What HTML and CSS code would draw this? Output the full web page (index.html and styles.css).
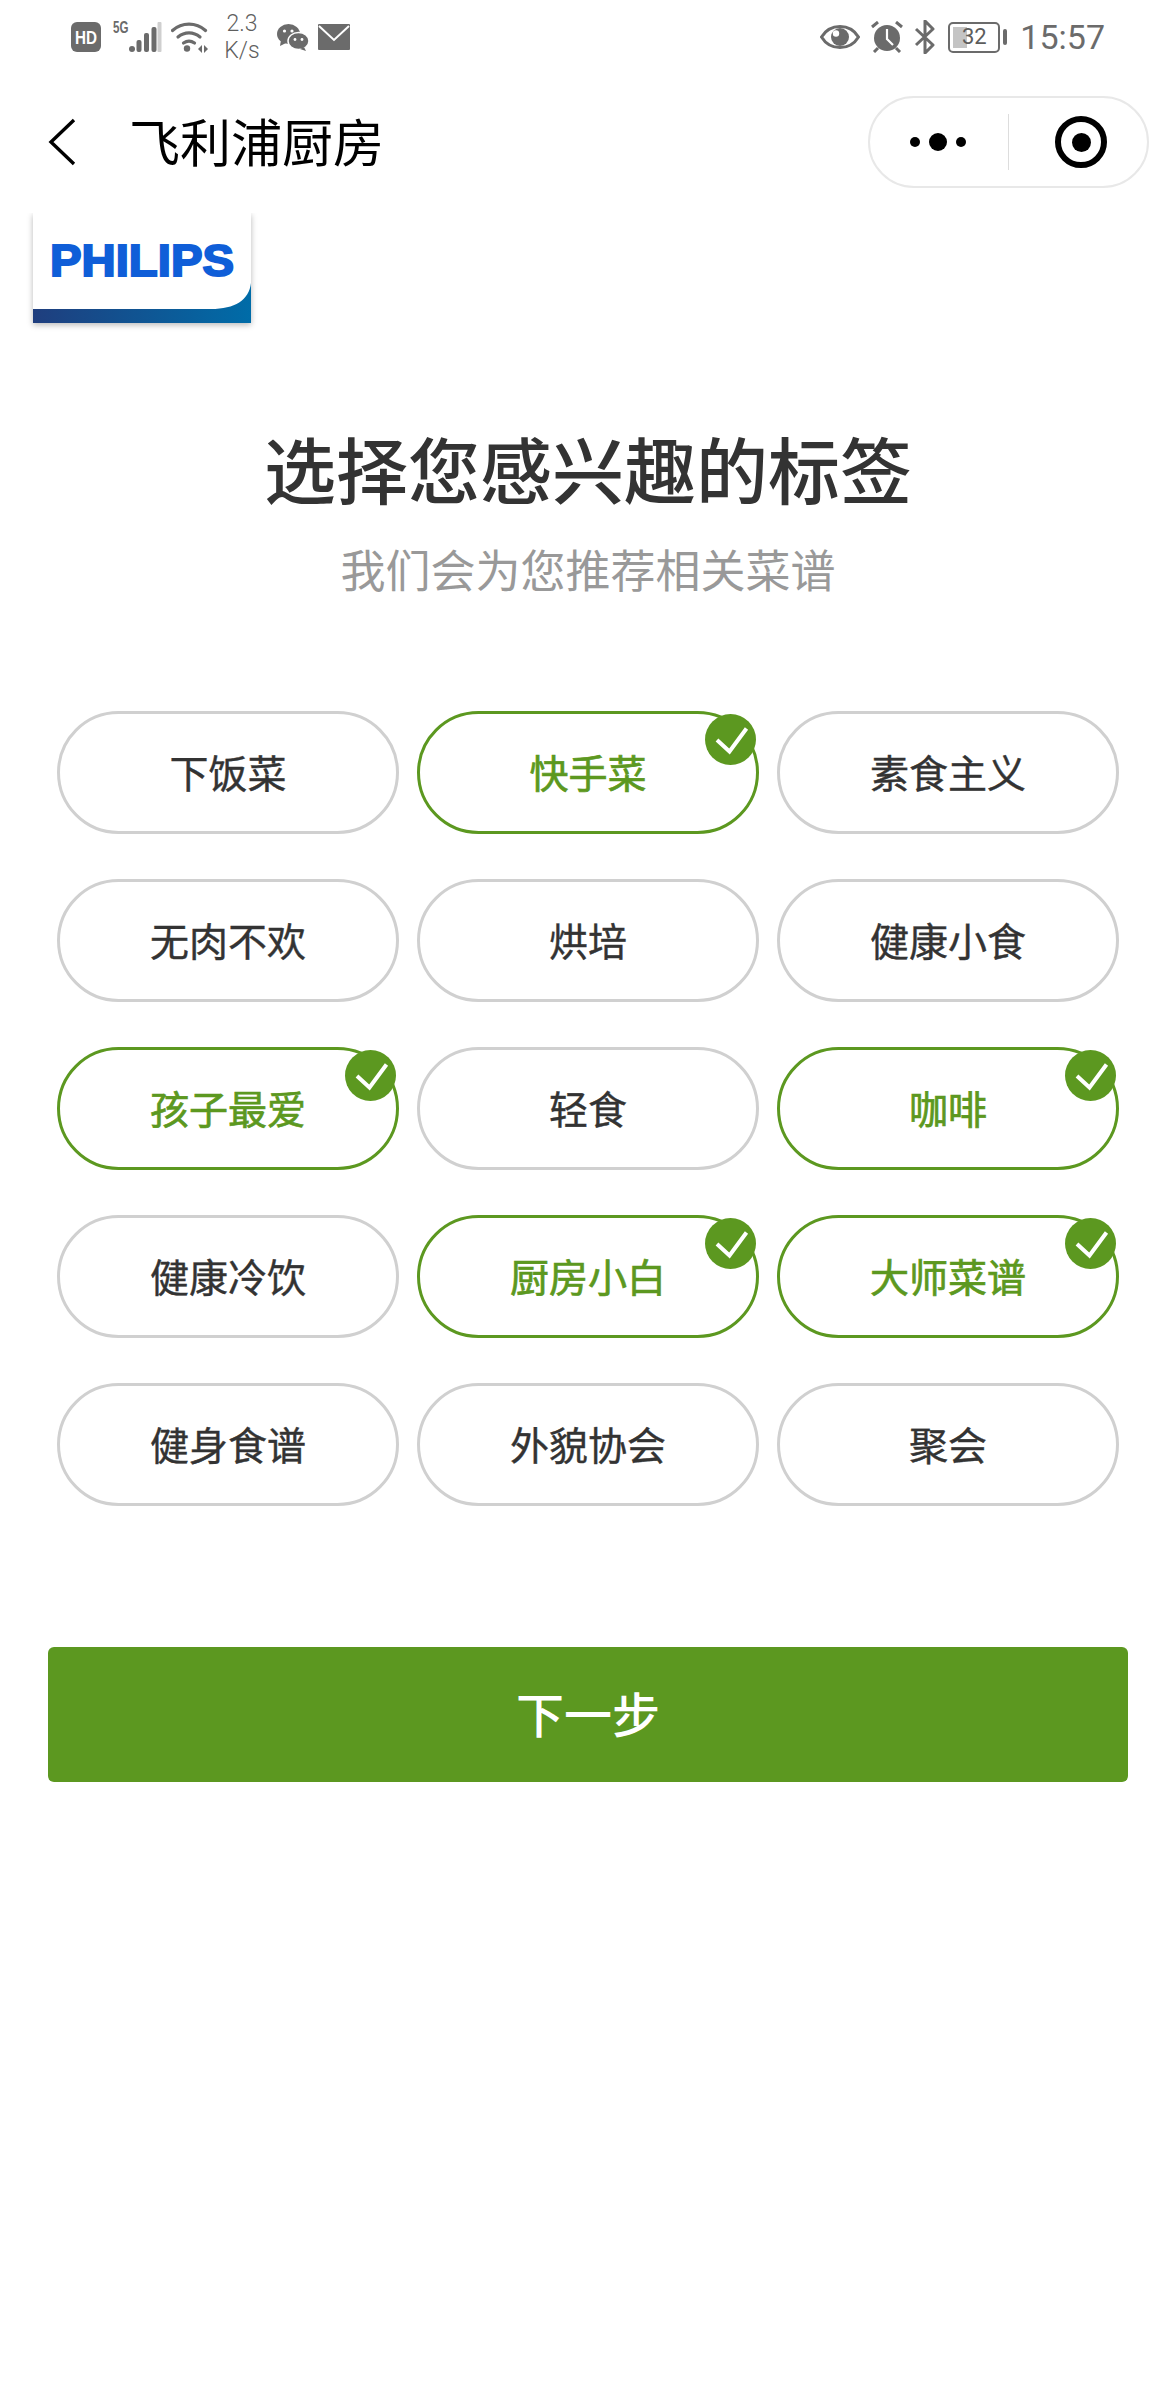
FILE: index.html
```html
<!DOCTYPE html>
<html lang="zh-CN">
<head>
<meta charset="utf-8">
<title>飞利浦厨房</title>
<link rel="stylesheet" href="styles.css">
</head>
<body>
<div class="status">
  <div class="status-group left">
    <svg class="ic-hd" width="30" height="30" viewBox="0 0 30 30"><rect width="30" height="30" rx="6" fill="#6b6b6b"/><text x="4" y="21.500" class="hd-text" textLength="22" lengthAdjust="spacingAndGlyphs">HD</text></svg>
    <div class="signal">
      <span class="five-g">5G</span>
      <svg width="34" height="31" viewBox="0 0 34 31"><circle cx="4" cy="27" r="3" fill="#6b6b6b"/><rect x="8.500" y="18" width="5" height="12" rx="2" fill="#6b6b6b"/><rect x="16" y="11" width="5" height="19" rx="2" fill="#6b6b6b"/><rect x="23.500" y="5" width="5" height="25" rx="2" fill="#6b6b6b"/><rect x="29.500" y="0" width="4" height="30" rx="1" fill="#cfcfcf"/></svg>
    </div>
    <svg class="ic-wifi" width="38" height="32" viewBox="0 0 38 32"><g fill="none" stroke="#6b6b6b" stroke-width="3.200" stroke-linecap="round"><path d="M1.500 9.500C11 1 25 1 34.500 9.500"/><path d="M7 16C13.500 10.500 22.500 10.500 29 16"/><path d="M12.500 22C16 19.500 20 19.500 23.500 22"/></g><circle cx="16" cy="27.500" r="3.200" fill="#6b6b6b"/><path d="M27 28l4-4v8zM33 24l4 4-4 4z" fill="#6b6b6b"/></svg>
    <div class="speed"><span>2.3</span><span>K/s</span></div>
    <svg class="ic-wechat" width="32" height="27" viewBox="0 0 32 27"><ellipse cx="11.500" cy="10" rx="11.500" ry="10" fill="#6b6b6b"/><path d="M4 16l-1 6 6-3z" fill="#6b6b6b"/><ellipse cx="21.500" cy="17" rx="10.500" ry="8.500" fill="#6b6b6b" stroke="#fff" stroke-width="1.500"/><path d="M27 23l2 4-6-2z" fill="#6b6b6b"/><circle cx="7.500" cy="7" r="1.600" fill="#fff"/><circle cx="15" cy="7" r="1.600" fill="#fff"/><circle cx="18" cy="15.500" r="1.400" fill="#fff"/><circle cx="25" cy="15.500" r="1.400" fill="#fff"/></svg>
    <svg class="ic-mail" width="32" height="26" viewBox="0 0 32 26"><rect width="32" height="26" rx="1" fill="#6b6b6b"/><path d="M1 2l15 14L31 2" fill="none" stroke="#fff" stroke-width="2"/></svg>
  </div>
  <div class="status-group right">
    <svg width="40" height="26" viewBox="0 0 40 26"><path d="M1.500 13C10 -1 30 -1 38.500 13C30 27 10 27 1.500 13Z" fill="none" stroke="#6b6b6b" stroke-width="3"/><circle cx="20" cy="13" r="9" fill="#6b6b6b"/><circle cx="16" cy="9.500" r="3.200" fill="#fff"/></svg>
    <svg width="34" height="32" viewBox="0 0 34 32"><circle cx="17" cy="17" r="13" fill="#6b6b6b"/><path d="M17 8v10l6 6" fill="none" stroke="#fff" stroke-width="2.200"/><path d="M2 6l6-5M32 6l-6-5M4 31l4-4M30 31l-4-4" stroke="#6b6b6b" stroke-width="3" fill="none"/></svg>
    <svg width="22" height="34" viewBox="0 0 22 34"><path d="M2 9l17 16-8 8V1l8 8L2 25" fill="none" stroke="#6b6b6b" stroke-width="3" stroke-linejoin="round"/></svg>
    <div class="battery">
      <div class="battery-body"><span class="battery-fill"></span><span class="battery-num">32</span></div>
      <span class="battery-tip"></span>
    </div>
    <span class="time">15:57</span>
  </div>
</div>

<div class="nav">
  <svg class="back" width="30" height="50" viewBox="0 0 30 50"><path d="M27 3L4 25l23 22" fill="none" stroke="#000" stroke-width="3.400"/></svg>
  <h1 class="nav-title">飞利浦厨房</h1>
  <div class="capsule">
    <div class="capsule-more"><span class="dot"></span><span class="dot big"></span><span class="dot"></span></div>
    <div class="capsule-close"><span class="target"></span></div>
  </div>
</div>

<div class="logo">
  <svg width="218" height="110" viewBox="0 0 218 110">
    <defs><linearGradient id="wave" x1="0" x2="1" y1="0" y2="0"><stop offset="0" stop-color="#1f3e7e"/><stop offset="1" stop-color="#006ca8"/></linearGradient></defs>
    <rect width="218" height="110" fill="#fff"/>
    <path d="M0 96H178C202 96 216 87 218 70V110H0Z" fill="url(#wave)"/>
    <text x="17" y="63" class="logo-text" textLength="184" lengthAdjust="spacingAndGlyphs">PHILIPS</text>
  </svg>
</div>

<main class="main">
  <h2 class="title">选择您感兴趣的标签</h2>
  <p class="subtitle">我们会为您推荐相关菜谱</p>
  <div class="tags">
    <div class="tag">下饭菜</div>
    <div class="tag on">快手菜<svg class="check" viewBox="0 0 51 51"><circle cx="25.500" cy="25.500" r="25.500" fill="#5c9820"/><path d="M12 26l12.500 11.500L41.500 14.500" fill="none" stroke="#fff" stroke-width="4"/></svg></div>
    <div class="tag">素食主义</div>
    <div class="tag">无肉不欢</div>
    <div class="tag">烘培</div>
    <div class="tag">健康小食</div>
    <div class="tag on">孩子最爱<svg class="check" viewBox="0 0 51 51"><circle cx="25.500" cy="25.500" r="25.500" fill="#5c9820"/><path d="M12 26l12.500 11.500L41.500 14.500" fill="none" stroke="#fff" stroke-width="4"/></svg></div>
    <div class="tag">轻食</div>
    <div class="tag on">咖啡<svg class="check" viewBox="0 0 51 51"><circle cx="25.500" cy="25.500" r="25.500" fill="#5c9820"/><path d="M12 26l12.500 11.500L41.500 14.500" fill="none" stroke="#fff" stroke-width="4"/></svg></div>
    <div class="tag">健康冷饮</div>
    <div class="tag on">厨房小白<svg class="check" viewBox="0 0 51 51"><circle cx="25.500" cy="25.500" r="25.500" fill="#5c9820"/><path d="M12 26l12.500 11.500L41.500 14.500" fill="none" stroke="#fff" stroke-width="4"/></svg></div>
    <div class="tag on">大师菜谱<svg class="check" viewBox="0 0 51 51"><circle cx="25.500" cy="25.500" r="25.500" fill="#5c9820"/><path d="M12 26l12.500 11.500L41.500 14.500" fill="none" stroke="#fff" stroke-width="4"/></svg></div>
    <div class="tag">健身食谱</div>
    <div class="tag">外貌协会</div>
    <div class="tag">聚会</div>
  </div>
  <button class="next" type="button">下一步</button>
</main>
</body>
</html>
```

FILE: styles.css
```css
* { box-sizing: border-box; }
html, body { margin: 0; padding: 0; background: #fff; }
body {
  width: 1176px;
  height: 2400px;
  overflow: hidden;
  font-family: "Noto Sans CJK SC", "Noto Sans", sans-serif;
  color: #333;
}

.status {
  height: 75px;
  padding: 13px 71px 0 71px;
  display: flex;
  justify-content: space-between;
  align-items: flex-start;
}
.status-group { display: flex; align-items: center; height: 48px; }
.left { gap: 9px; }
.right { gap: 10px; }
.hd-text { font: 700 18px "Liberation Sans", sans-serif; fill: #fff; }
.signal { display: flex; align-items: flex-end; position: relative; padding-left: 16px; height: 32px; margin-left: 2px; }
.five-g {
  position: absolute;
  left: 1px;
  top: 0;
  font: 700 17px/13px "Liberation Sans", sans-serif;
  color: #6b6b6b;
  transform: scaleX(.68);
  transform-origin: left top;
}
.speed {
  display: flex;
  flex-direction: column;
  align-items: center;
  width: 34px;
  margin: 0 9px 0 7px;
  font: 300 23px/27px "Roboto", "Liberation Sans", sans-serif;
  color: #5f5f5f;
}
.battery { display: flex; align-items: center; gap: 3px; margin-left: 2px; }
.battery-body {
  width: 52px;
  height: 31px;
  border: 2.500px solid #6b6b6b;
  border-radius: 5px;
  position: relative;
  display: flex;
  align-items: center;
  justify-content: center;
  padding: 3px;
}
.battery-fill {
  position: absolute;
  left: 3px;
  top: 3px;
  bottom: 3px;
  width: 14px;
  background: #c4c4c4;
}
.battery-num { position: relative; font: 22px/1 "Roboto", sans-serif; color: #5c5c5c; }
.battery-tip { width: 4px; height: 16px; border-radius: 2px; background: #6b6b6b; }
.time { font: 34px/36px "Roboto", sans-serif; color: #6b6b6b; margin-left: 3px; }

.nav {
  height: 138px;
  padding: 21px 27px 0 47px;
  display: flex;
  align-items: flex-start;
}
.back { margin-top: 21px; flex: none; }
.nav-title {
  margin: 0 0 0 52px;
  font-size: 51px;
  font-weight: 400;
  line-height: 72px;
  height: 92px;
  padding-top: 8px;
  color: #000;
  flex: 1;
}
.capsule {
  width: 281px;
  height: 92px;
  border: 2px solid #e8e8e8;
  border-radius: 46px;
  display: flex;
  align-items: center;
  background: #fff;
}
.capsule-more {
  width: 139px;
  height: 56px;
  border-right: 1px solid #ddd;
  display: flex;
  align-items: center;
  justify-content: center;
  gap: 9px;
  padding-right: 2px;
}
.dot { width: 10px; height: 10px; border-radius: 50%; background: #000; }
.dot.big { width: 18px; height: 18px; }
.capsule-close { flex: 1; display: flex; align-items: center; justify-content: center; padding-left: 6px; }
.target {
  width: 52px;
  height: 52px;
  border-radius: 50%;
  border: 6px solid #000;
  display: flex;
  align-items: center;
  justify-content: center;
}
.target::before { content: ""; width: 19px; height: 19px; border-radius: 50%; background: #000; }

.logo {
  width: 218px;
  height: 110px;
  margin-left: 33px;
  box-shadow: 0 2px 6px rgba(0, 0, 0, .28);
  clip-path: inset(0 -12px -12px -12px);
}
.logo svg { display: block; }
.logo-text { font: 700 44px "Liberation Sans", sans-serif; fill: #0f5ed8; stroke: #0f5ed8; stroke-width: 2px; }

.main { display: flex; flex-direction: column; align-items: center; }
.title {
  margin: 94px 0 0;
  font-size: 72px;
  font-weight: 500;
  line-height: 100px;
  color: #333;
}
.subtitle {
  margin: 20px 0 0;
  font-size: 45px;
  line-height: 64px;
  color: #999;
}
.tags {
  margin-top: 110px;
  width: 1062px;
  display: grid;
  grid-template-columns: repeat(3, 342px);
  grid-auto-rows: 123px;
  column-gap: 18px;
  row-gap: 45px;
}
.tag {
  position: relative;
  border: 3px solid #d0d0d0;
  border-radius: 62px;
  display: flex;
  align-items: center;
  justify-content: center;
  padding-bottom: 3px;
  font-size: 39px;
  -webkit-text-stroke: .4px currentColor;
  color: #333;
  background: #fff;
}
.tag.on { border-color: #5c9820; color: #5c9820; -webkit-text-stroke-width: .7px; }
.check {
  position: absolute;
  top: 0;
  right: 0;
  width: 51px;
  height: 51px;
}
.next {
  margin-top: 141px;
  width: 1080px;
  height: 135px;
  padding-bottom: 6px;
  border: 0;
  border-radius: 6px;
  background: #5c9820;
  color: #fff;
  font-family: inherit;
  font-size: 48px;
  font-weight: 500;
}
```
